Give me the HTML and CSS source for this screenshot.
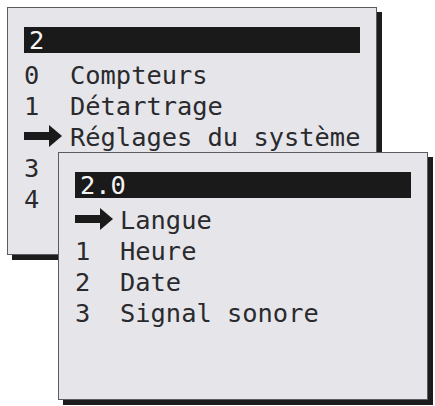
FILE: index.html
```html
<!DOCTYPE html>
<html lang="fr">
<head>
<meta charset="utf-8">
<title>Menu</title>
<link rel="stylesheet" href="styles.css">
</head>
<body>
<div class="desk">
  <section class="panel panel-main">
    <div class="title">2</div>
    <ul class="menu">
      <li><span class="key">0</span><span class="label">Compteurs</span></li>
      <li><span class="key">1</span><span class="label">Détartrage</span></li>
      <li><span class="key"><svg class="arrow" viewBox="0 0 38 22" width="38" height="22"><rect x="0" y="7" width="26" height="8"/><polygon points="25,0 38,11 25,22"/></svg></span><span class="label">Réglages du système</span></li>
      <li><span class="key">3</span><span class="label"></span></li>
      <li><span class="key">4</span><span class="label"></span></li>
    </ul>
  </section>
  <section class="panel panel-sub">
    <div class="title">2.0</div>
    <ul class="menu">
      <li><span class="key"><svg class="arrow" viewBox="0 0 38 22" width="38" height="22"><rect x="0" y="7" width="26" height="8"/><polygon points="25,0 38,11 25,22"/></svg></span><span class="label">Langue</span></li>
      <li><span class="key">1</span><span class="label">Heure</span></li>
      <li><span class="key">2</span><span class="label">Date</span></li>
      <li><span class="key">3</span><span class="label">Signal sonore</span></li>
    </ul>
  </section>
</div>
</body>
</html>
```
FILE: styles.css
```css
html, body {
  margin: 0;
  padding: 0;
  background: #ffffff;
}

.desk {
  position: relative;
  width: 435px;
  height: 406px;
  overflow: hidden;
  font-family: "DejaVu Sans Mono", "Liberation Mono", monospace;
  font-size: 25.4px;
  font-variant-numeric: slashed-zero;
  color: #2a2a2e;
}

.panel {
  position: absolute;
  box-sizing: border-box;
  width: 370px;
  height: 248px;
  padding: 19px 16px 0 16px;
  background: #e6e6ea;
  border: 1px solid #5c5c60;
  box-shadow: 5px 5px 0 #1c1c1c;
}

.panel-main {
  left: 7px;
  top: 7px;
}

.panel-sub {
  left: 58px;
  top: 152px;
}

.title {
  height: 26px;
  line-height: 27px;
  padding-left: 5px;
  background: #1b1a1b;
  color: #f4f4f4;
}

.menu {
  list-style: none;
  margin: 7px 0 0 0;
  padding: 0;
}

.menu li {
  display: grid;
  grid-template-columns: 46px 1fr;
  align-items: center;
  height: 31px;
  line-height: 31px;
  white-space: nowrap;
}

.panel-sub .menu li {
  grid-template-columns: 45px 1fr;
}

.key {
  display: flex;
  align-items: center;
  height: 31px;
}

.arrow {
  display: block;
  fill: #1b1a1b;
  margin-top: -4px;
}
```
